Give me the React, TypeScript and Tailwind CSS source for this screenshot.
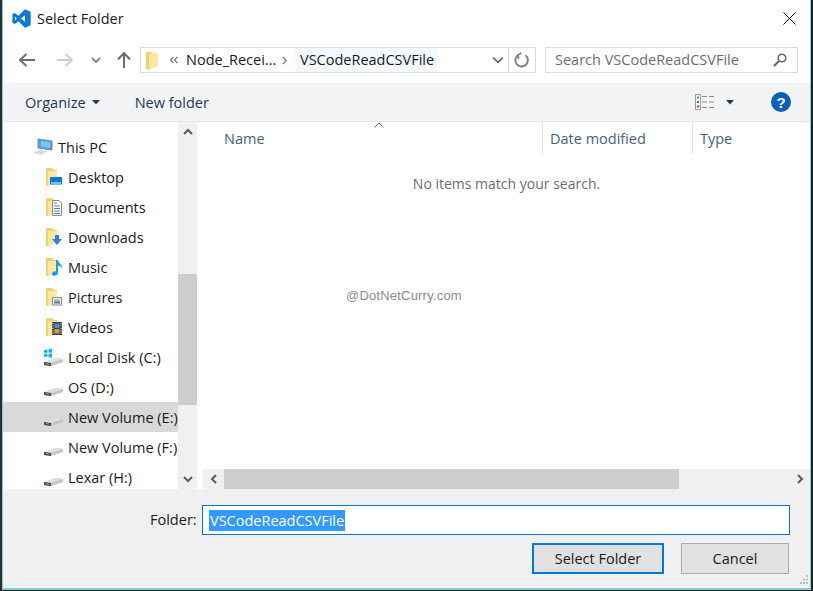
import React from "react";

const font = { fontFamily: '"Open Sans", "Noto Sans", sans-serif' };

function VSCode() {
  return (
    <svg width="19" height="19" viewBox="0 0 19 19" className="shrink-0">
      <path fill="#0b7ad1" fillRule="evenodd" d="M13 0.3 L18.7 2.8 V16.2 L13 18.7 L6.5 12.2 L2.7 15 L0.4 13.8 V5.2 L2.7 4 L6.5 6.8 Z M13 6.2 L9 9.5 L13 12.8 Z M2.9 7.6 V11.4 L4.8 9.5 Z" />
    </svg>
  );
}

function Close() {
  return (
    <svg width="13" height="13" viewBox="0 0 13 13">
      <path d="M0.5 0.5 L12.5 12.5 M12.5 0.5 L0.5 12.5" stroke="#111" strokeWidth="1" />
    </svg>
  );
}

function Arrow({ dir, color }: { dir: "left" | "right" | "up"; color: string }) {
  const d =
    dir === "left"
      ? "M1 8 H16 M7.5 2 L1 8 L7.5 14"
      : dir === "right"
        ? "M0 8 H15 M8.5 2 L15 8 L8.5 14"
        : "M8 1 V16 M2 7.5 L8 1 L14 7.5";
  return (
    <svg width="16" height="16" viewBox="0 0 16 16" className="shrink-0">
      <path d={d} fill="none" stroke={color} strokeWidth="2" />
    </svg>
  );
}

function Chevron({ dir, size = 10, color = "#5a5a5a", sw = 2 }: { dir: "up" | "down" | "left" | "right"; size?: number; color?: string; sw?: number }) {
  const d = {
    up: "M1 7 L5 3 L9 7",
    down: "M1 3 L5 7 L9 3",
    left: "M7 1 L3 5 L7 9",
    right: "M3 1 L7 5 L3 9",
  }[dir];
  return (
    <svg width={size} height={size} viewBox="0 0 10 10" className="shrink-0">
      <path d={d} fill="none" stroke={color} strokeWidth={sw} />
    </svg>
  );
}

function Caret() {
  return (
    <svg width="8" height="5" viewBox="0 0 8 5" className="shrink-0">
      <path d="M0 0 H8 L4 4.5 Z" fill="#1e395b" />
    </svg>
  );
}

function FolderBase({ children }: { children?: React.ReactNode }) {
  return (
    <svg width="23" height="20" viewBox="0 0 23 20" className="shrink-0">
      <path d="M1 1 H7 L9 3 H12 V15 L3 19 H1 Z" fill="#f2cf72" />
      <path d="M3 4 H12 V16 L3 19 Z" fill="#fbe6a2" />
      {children}
    </svg>
  );
}

function NavIcon({ name }: { name: string }) {
  if (name === "pc") {
    return (
      <svg width="22" height="18" viewBox="0 0 22 18" className="shrink-0">
        <path d="M6 1 L20 3 V12 L6 10 Z" fill="#4aa6e6" stroke="#7c8a96" strokeWidth="1" />
        <path d="M9 3 L18 4.5 V10 L9 8.5 Z" fill="#7cc6f4" />
        <path d="M1 15 L7 12 L15 13 L9 17 Z" fill="#d7dbe0" />
      </svg>
    );
  }
  if (name === "Desktop")
    return (
      <FolderBase>
        <rect x="5" y="10" width="12" height="7.5" fill="#0f78cf" />
        <rect x="6" y="15.5" width="10" height="1" fill="#fff" />
      </FolderBase>
    );
  if (name === "Documents")
    return (
      <FolderBase>
        <path d="M7.5 3.5 H14 L16.5 6 V18.5 H7.5 Z" fill="#fff" stroke="#8a8a8a" strokeWidth="1" />
        <path d="M9 6 H12 M9 9 H15 M9 11.5 H15 M9 14 H15 M9 16.5 H15" stroke="#4d7ea8" strokeWidth="1" />
      </FolderBase>
    );
  if (name === "Downloads")
    return (
      <FolderBase>
        <path d="M10 8 H14 V12 H17 L12 18 L7 12 H10 Z" fill="#2b84d8" />
      </FolderBase>
    );
  if (name === "Music")
    return (
      <FolderBase>
        <path d="M11 3 H13 C13.5 7 18 7 17 12 C16.5 9 14.5 9 13 8.5 V16 C13 19 7 20 7 17 C7 15 9.5 14 11 14.5 Z" fill="#1a9ae8" />
      </FolderBase>
    );
  if (name === "Pictures")
    return (
      <FolderBase>
        <rect x="7.5" y="10.5" width="9" height="7.5" fill="#fff" stroke="#8a8a8a" />
        <rect x="9" y="12" width="6" height="2.5" fill="#9fc6e6" />
        <rect x="9" y="14.5" width="6" height="2" fill="#5a6a70" />
      </FolderBase>
    );
  if (name === "Videos")
    return (
      <FolderBase>
        <rect x="7" y="5" width="10" height="13" fill="#3c3c3c" />
        <rect x="9.5" y="6.5" width="5" height="4.5" fill="#4a8ed0" />
        <rect x="9.5" y="12" width="5" height="4.5" fill="#d0a040" />
        <path d="M8 6 V17 M16 6 V17" stroke="#ddd" strokeWidth="1.2" strokeDasharray="1.2 1.2" />
      </FolderBase>
    );
  return (
    <svg width="22" height="20" viewBox="0 0 22 20" className="shrink-0">
      <path d="M1 15 L13 11 L20 12 V15 L8 19 L1 18 Z" fill="#c4c4c4" />
      <path d="M1 15 L8 16 L20 12 L13 11 Z" fill="#e0e0e0" />
      <path d="M1 15 L8 16 V19 L1 18 Z" fill="#4a4a4a" />
      <path d="M3 16.5 L6 17" stroke="#58c060" strokeWidth="1" />
      {name === "win" && (
        <path d="M1 3 L4.5 2.5 V5.8 H1 Z M5.5 2.3 L9 1.8 V5.8 H5.5 Z M1 6.7 H4.5 V10 L1 9.5 Z M5.5 6.7 H9 V10.7 L5.5 10.2 Z" fill="#12b4ec" />
      )}
    </svg>
  );
}

const navItems = [
  { label: "This PC", icon: "pc", indent: "pl-[29px]", gap: "gap-[4px]" },
  { label: "Desktop", icon: "Desktop", indent: "pl-[42px]", gap: "gap-0" },
  { label: "Documents", icon: "Documents", indent: "pl-[42px]", gap: "gap-0" },
  { label: "Downloads", icon: "Downloads", indent: "pl-[42px]", gap: "gap-0" },
  { label: "Music", icon: "Music", indent: "pl-[42px]", gap: "gap-0" },
  { label: "Pictures", icon: "Pictures", indent: "pl-[42px]", gap: "gap-0" },
  { label: "Videos", icon: "Videos", indent: "pl-[42px]", gap: "gap-0" },
  { label: "Local Disk (C:)", icon: "win", indent: "pl-[40px]", gap: "gap-[3px]" },
  { label: "OS (D:)", icon: "drive", indent: "pl-[40px]", gap: "gap-[3px]" },
  { label: "New Volume (E:)", icon: "drive", indent: "pl-[40px]", gap: "gap-[3px]", selected: true },
  { label: "New Volume (F:)", icon: "drive", indent: "pl-[40px]", gap: "gap-[3px]" },
  { label: "Lexar (H:)", icon: "drive", indent: "pl-[40px]", gap: "gap-[3px]" },
];

export default function App() {
  return (
    <div className="w-[813px] h-[591px] flex bg-[#1d2326] overflow-hidden text-[14.5px] leading-5" style={font}>
      <div className="w-[2px] shrink-0 bg-[#2a2e30]" />
      <div className="w-[809px] h-[590px] flex flex-col bg-white border-l border-r border-b-2 border-[#78d5cc]">
        {/* title bar */}
        <div className="h-[37px] shrink-0 flex items-center pl-[9px] pr-[14px] gap-[6px]">
          <VSCode />
          <span className="text-[#1a1a1a]">Select Folder</span>
          <div className="ml-auto flex"><Close /></div>
        </div>

        {/* navigation row */}
        <div className="h-[46px] shrink-0 flex items-center pl-[16px]">
          <Arrow dir="left" color="#6e6e6e" />
          <div className="w-[22px]" />
          <Arrow dir="right" color="#cfcfcf" />
          <div className="w-[18px]" />
          <Chevron dir="down" color="#8a8a8a" />
          <div className="w-[15px]" />
          <Arrow dir="up" color="#6e6e6e" />
          <div className="w-[8px]" />
          <div className="w-[396px] h-[26px] flex items-center border border-[#d9d9d9] text-[#1a1a1a]">
            <div className="pl-[5px] flex">
              <svg width="13" height="19" viewBox="0 0 13 19" className="shrink-0">
                <path d="M0 1 H5 L6 2.5 H12 V15 L3 18.5 H0 Z" fill="#f2cf72" />
                <path d="M3 3 H12 V15 L3 18.5 Z" fill="#fbe6a2" />
              </svg>
            </div>
            <span className="ml-[11px] flex">
              <svg width="8" height="8" viewBox="0 0 8 8" className="shrink-0">
                <path d="M3.5 1 L0.7 4 L3.5 7 M7.3 1 L4.5 4 L7.3 7" fill="none" stroke="#777" strokeWidth="1.2" />
              </svg>
            </span>
            <span className="ml-[8px] w-[90px] whitespace-nowrap">Node_Recei...</span>
            <span className="ml-[4px] flex"><Chevron dir="right" size={9} color="#777" sw={1.4} /></span>
            <div className="ml-[6px] w-[142px] h-full flex items-center bg-[#f4f9ff] pl-[5px] whitespace-nowrap">VSCodeReadCSVFile</div>
            <div className="flex-1 flex items-center justify-end pr-[4px] h-full">
              <Chevron dir="down" size={12} color="#666" sw={1.4} />
            </div>
            <div className="w-[27px] h-full shrink-0 border-l border-[#d9d9d9] flex items-center justify-center">
              <svg width="16" height="16" viewBox="0 0 16 16">
                <path d="M11.5 3.2 A6.3 6.3 0 1 1 4 3 M7.5 1 L4 3 L4.5 7" fill="none" stroke="#808080" strokeWidth="1.9" />
              </svg>
            </div>
          </div>
          <div className="ml-[9px] w-[253px] h-[26px] flex items-center border border-[#d9d9d9] pl-[9px] pr-[10px] text-[#6d6d6d]">
            <span className="whitespace-nowrap">Search VSCodeReadCSVFile</span>
            <svg width="14" height="14" viewBox="0 0 14 14" className="ml-auto shrink-0">
              <circle cx="9" cy="5" r="3.8" fill="none" stroke="#666" strokeWidth="1.6" />
              <path d="M6 8 L1 13" stroke="#666" strokeWidth="2.2" />
            </svg>
          </div>
        </div>

        {/* toolbar */}
        <div className="h-[39px] shrink-0 flex items-center bg-[#f3f4f6] border-b border-[#e6e7e8] pl-[22px] pr-[19px] text-[#1e395b]">
          <span className="pt-[1px]">Organize</span>
          <span className="ml-[6px] flex"><Caret /></span>
          <span className="ml-[35px] pt-[1px]">New folder</span>
          <svg width="19" height="16" viewBox="0 0 19 16" className="ml-auto shrink-0">
            <rect x="0.5" y="0.5" width="5" height="15" fill="#fff" stroke="#9a9a9a" />
            <rect x="2" y="2.5" width="2" height="2" fill="#3a8a9a" />
            <rect x="2" y="7" width="2" height="2" fill="#5a7a5a" />
            <rect x="2" y="11.5" width="2" height="2" fill="#c03020" />
            <path d="M7 2.5 H12 M14 2.5 H19 M7 8 H12 M14 8 H19 M7 13.5 H12 M14 13.5 H19" stroke="#8a8a8a" strokeWidth="1" />
          </svg>
          <span className="ml-[12px] flex"><Caret /></span>
          <svg width="20" height="20" viewBox="0 0 20 20" className="ml-[37px] shrink-0">
            <circle cx="10" cy="10" r="10" fill="#0a5fb8" />
            <text x="10" y="15.5" textAnchor="middle" fontSize="15" fontWeight="700" fill="#fff" fontFamily="Liberation Sans, sans-serif">?</text>
          </svg>
        </div>

        {/* body */}
        <div className="h-[367px] shrink-0 flex">
          <div className="w-[175px] shrink-0 flex flex-col pt-[10px] overflow-hidden text-[#1a1a1a]">
            {navItems.map((it) => (
              <div
                key={it.label}
                className={`h-[30px] shrink-0 flex items-center whitespace-nowrap ${it.indent} ${it.gap} ${it.selected ? "bg-[#d9d9d9]" : ""}`}
              >
                <NavIcon name={it.icon} />
                <span className="pt-[1px]">{it.label}</span>
              </div>
            ))}
          </div>
          <div className="w-[19px] shrink-0 bg-[#f0f0f0] flex flex-col">
            <div className="h-[20px] flex items-center justify-center"><Chevron dir="up" /></div>
            <div className="h-[132px]" />
            <div className="h-[131px] bg-[#cdcdcd]" />
            <div className="flex-1" />
            <div className="h-[20px] flex items-center justify-center"><Chevron dir="down" /></div>
          </div>
          <div className="w-[6px] shrink-0" />
          <div className="relative flex-1 flex flex-col min-w-0">
            <div className="h-[32px] shrink-0 flex items-stretch text-[#4c607a]">
              <div className="relative w-[339px] pl-[21px] pt-[1px] flex items-center">
                Name
                <span className="absolute left-[171px] top-0 flex"><svg width="10" height="6" viewBox="0 0 10 6"><path d="M0.5 5.5 L5 1 L9.5 5.5" fill="none" stroke="#666" strokeWidth="1" /></svg></span>
              </div>
              <div className="w-[150px] border-l border-[#e5e5e5] pl-[7px] pt-[1px] flex items-center">Date modified</div>
              <div className="flex-1 border-l border-[#e5e5e5] pl-[7px] pt-[1px] flex items-center">Type</div>
            </div>
            <div className="flex-1 flex justify-center pt-[20px] text-[14px] text-[#6d6d6d]">No items match your search.</div>
            <div className="absolute left-[143px] top-[164px] text-[13px] tracking-[0.2px] text-[#8c8c8c]" style={{ fontFamily: '"Liberation Sans", sans-serif' }}>@DotNetCurry.com</div>
            <div className="h-[20px] shrink-0 bg-[#f0f0f0] flex">
              <div className="w-[21px] flex items-center justify-center"><Chevron dir="left" /></div>
              <div className="w-[455px] bg-[#cdcdcd]" />
              <div className="flex-1 flex items-center justify-end pr-[5px]"><Chevron dir="right" /></div>
            </div>
          </div>
        </div>

        {/* footer */}
        <div className="flex-1 relative bg-[#f0f0f0] flex flex-col text-[#1a1a1a]">
          <div className="mt-[16px] flex items-center pl-[147px] pr-[20px]">
            <span className="w-[52px]">Folder:</span>
            <div className="flex-1 h-[30px] bg-white border border-[#0078d7] pl-[6px] flex items-center">
              <span className="bg-[#3399ff] text-white px-[1px] leading-[21px]">VSCodeReadCSVFile</span>
            </div>
          </div>
          <div className="mt-[8px] flex justify-end gap-[17px] pr-[21px]">
            <div className="w-[132px] h-[31px] flex items-center justify-center bg-[#e1e1e1] border-2 border-[#0078d7]">Select Folder</div>
            <div className="w-[108px] h-[31px] flex items-center justify-center bg-[#e1e1e1] border border-[#adadad]">Cancel</div>
          </div>
          <svg width="12" height="12" viewBox="0 0 12 12" className="absolute right-[1px] bottom-[1px]">
            <path d="M9 0 h2 v2 h-2 Z M6 3.5 h2 v2 h-2 Z M9 3.5 h2 v2 h-2 Z M3 7 h2 v2 h-2 Z M6 7 h2 v2 h-2 Z M9 7 h2 v2 h-2 Z" fill="#bdbdbd" />
          </svg>
        </div>
      </div>
    </div>
  );
}
